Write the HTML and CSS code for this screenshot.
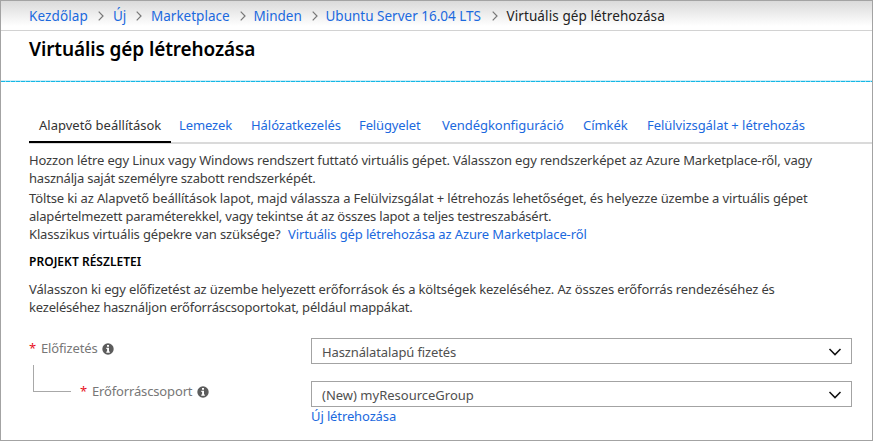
FILE: index.html
```html
<!DOCTYPE html>
<html lang="hu">
<head>
<meta charset="utf-8">
<title>Virtuális gép létrehozása</title>
<link rel="stylesheet" href="styles.css">
</head>
<body>
<div class="window">
  <nav class="breadcrumb">
    <a class="crumb crumb-home">Kezdőlap</a>
    <svg class="sep" viewBox="0 0 6 10"><path d="M.7 .7 5 5 .7 9.3"/></svg>
    <a class="crumb crumb-new">Új</a>
    <svg class="sep" viewBox="0 0 6 10"><path d="M.7 .7 5 5 .7 9.3"/></svg>
    <a class="crumb crumb-market">Marketplace</a>
    <svg class="sep sep-tight" viewBox="0 0 6 10"><path d="M.7 .7 5 5 .7 9.3"/></svg>
    <a class="crumb crumb-all">Minden</a>
    <svg class="sep sep-tight" viewBox="0 0 6 10"><path d="M.7 .7 5 5 .7 9.3"/></svg>
    <a class="crumb crumb-ubuntu">Ubuntu Server 16.04 LTS</a>
    <svg class="sep" viewBox="0 0 6 10"><path d="M.7 .7 5 5 .7 9.3"/></svg>
    <span class="crumb crumb-current">Virtuális gép létrehozása</span>
  </nav>
  <header class="title-bar"><h1>Virtuális gép létrehozása</h1></header>
  <div class="divider"></div>
  <nav class="tabs">
    <a class="tab tab-basics">Alapvető beállítások</a>
    <a class="tab tab-disks">Lemezek</a>
    <a class="tab tab-network">Hálózatkezelés</a>
    <a class="tab tab-manage">Felügyelet</a>
    <a class="tab tab-guest">Vendégkonfiguráció</a>
    <a class="tab tab-tags">Címkék</a>
    <a class="tab tab-review">Felülvizsgálat + létrehozás</a>
  </nav>
  <main class="content">
    <p class="intro"><span class="l1">Hozzon létre egy Linux vagy Windows rendszert futtató virtuális gépet. Válasszon egy rendszerképet az Azure Marketplace-ről, vagy</span><br><span class="l2">használja saját személyre szabott rendszerképét.</span></p>
    <p class="help"><span class="l3">Töltse ki az Alapvető beállítások lapot, majd válassza a Felülvizsgálat + létrehozás lehetőséget, és helyezze üzembe a virtuális gépet</span><br><span class="l4">alapértelmezett paraméterekkel, vagy tekintse át az összes lapot a teljes testreszabásért.</span></p>
    <p class="classic"><span class="l5">Klasszikus virtuális gépekre van szüksége?</span><a class="l6">Virtuális gép létrehozása az Azure Marketplace-ről</a></p>
    <h2>PROJEKT RÉSZLETEI</h2>
    <p class="project"><span class="l7">Válasszon ki egy előfizetést az üzembe helyezett erőforrások és a költségek kezeléséhez. Az összes erőforrás rendezéséhez és</span><br><span class="l8">kezeléséhez használjon erőforráscsoportokat, például mappákat.</span></p>
    <div class="field">
      <div class="label">
        <span class="required">*</span><span class="name name-sub">Előfizetés</span>
        <svg class="info" viewBox="0 0 12 12"><circle cx="6" cy="6" r="5.7"/><path d="M5 2h2v1.8H5zM4.3 4.8H7v3.7h.8v1.2H4.3V8.5h.8V6h-.8z"/></svg>
      </div>
      <div class="select"><span class="v1">Használatalapú fizetés</span><svg class="chevron" viewBox="0 0 14 8"><path d="M1.5 1 7 6.6 12.5 1"/></svg></div>
    </div>
    <div class="field field-child">
      <div class="label">
        <span class="branch"></span><span class="required">*</span><span class="name name-group">Erőforráscsoport</span>
        <svg class="info" viewBox="0 0 12 12"><circle cx="6" cy="6" r="5.7"/><path d="M5 2h2v1.8H5zM4.3 4.8H7v3.7h.8v1.2H4.3V8.5h.8V6h-.8z"/></svg>
      </div>
      <div class="select"><span class="v2">(New) myResourceGroup</span><svg class="chevron" viewBox="0 0 14 8"><path d="M1.5 1 7 6.6 12.5 1"/></svg></div>
    </div>
    <a class="create">Új létrehozása</a>
  </main>
</div>
</body>
</html>
```
FILE: styles.css
```css
* { box-sizing: border-box; }
body { margin: 0; font: 13px/18px "Noto Sans", "Open Sans", sans-serif; color: #3c3c3c; background: #fff; }
.window { width: 873px; height: 441px; border: 1px solid #a3a3a3; overflow: hidden; }
h1, h2, p { margin: 0; }
a { color: #1b69de; }
span, a { white-space: nowrap; }
.breadcrumb { height: 30px; display: flex; align-items: center; padding-left: 28px; border-bottom: 1px solid #d2d2d2; background: linear-gradient(#dadada, #fff 25px); font-size: 13.5px; }
.crumb { flex: none; }
.crumb-home { width: 69px; letter-spacing: .1px; }
.crumb-new { width: 23px; }
.crumb-market { width: 89px; }
.crumb-all { width: 58.5px; }
.crumb-ubuntu { width: 166px; }
.crumb-current { color: #222; letter-spacing: .1px; }
.sep { width: 6px; height: 10px; margin-right: 9px; flex: none; fill: none; stroke: #777; stroke-width: 1.2; }
.sep-tight { margin-right: 7.5px; }
.title-bar { height: 49px; padding: 5px 0 0 28px; }
.divider { height: 2px; background: repeating-linear-gradient(90deg, #16b8e6 0 4px, #8fdcf2 4px 5px) 0 1px / 100% 1px no-repeat, #cdeef8; }
h1 { font-size: 19px; line-height: 27px; font-weight: 600; letter-spacing: -.11px; color: #000; }
.tabs { height: 62px; margin-left: 28px; display: flex; align-items: flex-end; border-bottom: 2px solid #dadada; letter-spacing: -.05px; }
.tab { flex: none; height: 26px; }
.tab-basics { width: 142px; padding-left: 10px; margin: 0 8px -1px 0; height: 27px; border-bottom: 2px solid #000; color: #333; letter-spacing: 0; }
.tab-disks { width: 72px; letter-spacing: -.12px; }
.tab-network { width: 108px; }
.tab-manage { width: 83px; letter-spacing: -.12px; }
.tab-guest { width: 141px; }
.tab-tags { width: 64px; }
.content { padding: 7px 20px 0 28px; }
.l1 { letter-spacing: -.13px; }
.l2 { letter-spacing: -.22px; }
.l3 { letter-spacing: -.13px; }
.l4 { letter-spacing: -.2px; }
.l5 { width: 259px; letter-spacing: -.14px; }
.l6 { letter-spacing: -.12px; }
.l7 { letter-spacing: -.14px; }
.l8 { letter-spacing: -.2px; }
.v1 { letter-spacing: -.12px; }
.help { margin-top: 2px; }
.classic { display: flex; }
h2 { margin-top: 10px; font-size: 12px; line-height: 18px; font-weight: 600; letter-spacing: .03px; color: #000; }
.project { margin-top: 9px; }
.field { display: flex; margin-top: 22px; height: 26px; }
.field-child { margin-top: 17px; }
.label { width: 282px; height: 20px; display: flex; align-items: center; color: #777; letter-spacing: -.15px; }
.required { width: 12px; color: #e81123; font-size: 13px; }
.info { width: 12px; height: 12px; margin: 2px 0 0 5px; fill: #5c5c5c; }
.info path { fill: #fff; }
.branch { width: 38px; height: 27px; margin: -26px 9px 0 4px; border: solid #a8a8a8; border-width: 0 0 1px 1px; }
.select { width: 541px; height: 26px; display: flex; align-items: center; justify-content: space-between; padding: 1px 9px 0 10px; border: 1px solid #a3a3a3; color: #505050; }
.chevron { width: 14px; height: 8px; fill: none; stroke: #111; stroke-width: 1.5; }
.create { display: block; margin: 0 0 0 282px; letter-spacing: -.12px; }
```
